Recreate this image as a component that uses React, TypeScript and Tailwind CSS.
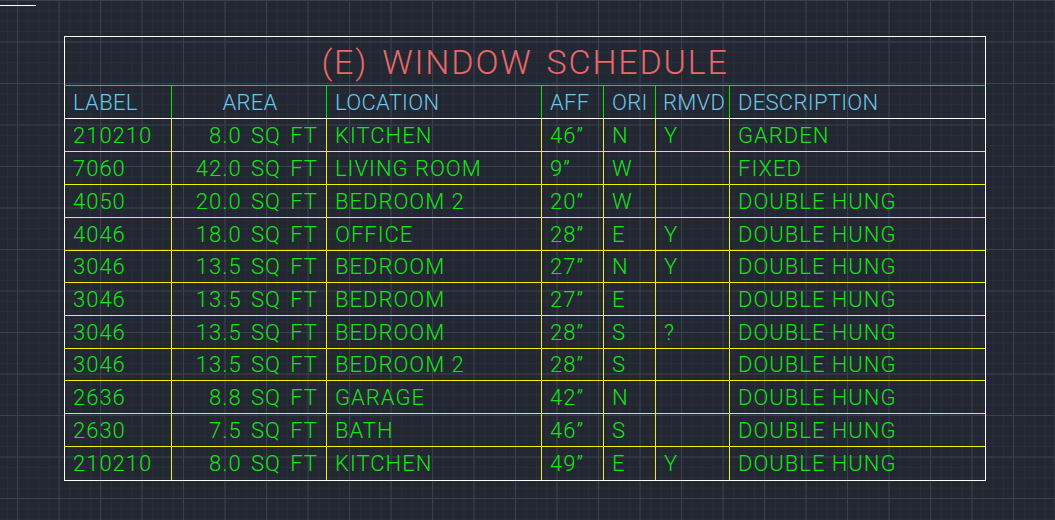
import React from 'react';

type Row = {
  label: string;
  area: string;
  location: string;
  aff: string;
  ori: string;
  rmvd: string;
  desc: string;
  h: string;
};

const rows: Row[] = [
  { label: '210210', area: '8.0 SQ FT', location: 'KITCHEN', aff: '46”', ori: 'N', rmvd: 'Y', desc: 'GARDEN', h: 'h-[33px]' },
  { label: '7060', area: '42.0 SQ FT', location: 'LIVING ROOM', aff: '9”', ori: 'W', rmvd: '', desc: 'FIXED', h: 'h-[33px]' },
  { label: '4050', area: '20.0 SQ FT', location: 'BEDROOM 2', aff: '20”', ori: 'W', rmvd: '', desc: 'DOUBLE HUNG', h: 'h-[33px]' },
  { label: '4046', area: '18.0 SQ FT', location: 'OFFICE', aff: '28”', ori: 'E', rmvd: 'Y', desc: 'DOUBLE HUNG', h: 'h-[33px]' },
  { label: '3046', area: '13.5 SQ FT', location: 'BEDROOM', aff: '27”', ori: 'N', rmvd: 'Y', desc: 'DOUBLE HUNG', h: 'h-[32px]' },
  { label: '3046', area: '13.5 SQ FT', location: 'BEDROOM', aff: '27”', ori: 'E', rmvd: '', desc: 'DOUBLE HUNG', h: 'h-[33px]' },
  { label: '3046', area: '13.5 SQ FT', location: 'BEDROOM', aff: '28”', ori: 'S', rmvd: '?', desc: 'DOUBLE HUNG', h: 'h-[33px]' },
  { label: '3046', area: '13.5 SQ FT', location: 'BEDROOM 2', aff: '28”', ori: 'S', rmvd: '', desc: 'DOUBLE HUNG', h: 'h-[32px]' },
  { label: '2636', area: '8.8 SQ FT', location: 'GARAGE', aff: '42”', ori: 'N', rmvd: '', desc: 'DOUBLE HUNG', h: 'h-[33px]' },
  { label: '2630', area: '7.5 SQ FT', location: 'BATH', aff: '46”', ori: 'S', rmvd: '', desc: 'DOUBLE HUNG', h: 'h-[33px]' },
  { label: '210210', area: '8.0 SQ FT', location: 'KITCHEN', aff: '49”', ori: 'E', rmvd: 'Y', desc: 'DOUBLE HUNG', h: 'h-[33px]' },
];

const cell = 'flex items-center pl-2 whitespace-nowrap';

export default function App() {
  return (
    <div className="relative w-[1055px] h-[520px] overflow-hidden bg-[#222731] bg-[linear-gradient(to_right,#394050_1px,transparent_1px),linear-gradient(to_bottom,#394050_1px,transparent_1px),linear-gradient(to_right,#282e39_1px,transparent_1px),linear-gradient(to_bottom,#282e39_1px,transparent_1px)] bg-[size:41.5px_41.5px,41.5px_41.5px,10.375px_10.375px,10.375px_10.375px] bg-[position:17px_0,0_0,7px_0,0_0] font-['Roboto','Liberation_Sans',sans-serif] font-light pt-[5px]">
      {/* stray line top-left */}
      <div className="h-px w-[36px] bg-white" />

      {/* Schedule table */}
      <div className="ml-[64px] mt-[30px] w-[922px] border border-white">
        {/* Title */}
        <div className="h-[49px] border-b border-[#00e600] flex items-center justify-center pt-[2px] text-[34px] tracking-[1.8px] [word-spacing:4px] text-[#e8686a]">
          (E) WINDOW SCHEDULE
        </div>

        {/* Header */}
        <div className="flex h-[33px] border-b border-white text-[22px] tracking-[0.3px] text-[#6cc6ea]">
          <div className={`${cell} w-[106px]`}>LABEL</div>
          <div className={`${cell} w-[155px] border-l border-[#00e600] justify-center pl-0 pr-[6px]`}>AREA</div>
          <div className={`${cell} w-[215px] border-l border-[#00e600]`}>LOCATION</div>
          <div className={`${cell} w-[62px] border-l border-[#00e600]`}>AFF</div>
          <div className={`${cell} w-[52px] border-l border-[#00e600]`}>ORI</div>
          <div className={`${cell} w-[74px] border-l border-[#00e600] pl-[7px]`}>RMVD</div>
          <div className={`${cell} w-[256px] border-l border-[#00e600]`}>DESCRIPTION</div>
        </div>

        {/* Data rows */}
        {rows.map((r, i) => (
          <div
            key={i}
            className={`flex ${r.h} text-[22px] tracking-[1px] text-[#14e414] ${
              i < rows.length - 1 ? 'border-b border-[#f0f000]' : ''
            }`}
          >
            <div className={`${cell} w-[106px]`}>{r.label}</div>
            <div className={`${cell} w-[155px] border-l border-[#f0f000] justify-end pl-0 pr-2 [word-spacing:3px]`}>{r.area}</div>
            <div className={`${cell} w-[215px] border-l border-[#f0f000]`}>{r.location}</div>
            <div className={`${cell} w-[62px] border-l border-[#f0f000]`}>{r.aff}</div>
            <div className={`${cell} w-[52px] border-l border-[#f0f000]`}>{r.ori}</div>
            <div className={`${cell} w-[74px] border-l border-[#f0f000]`}>{r.rmvd}</div>
            <div className={`${cell} w-[256px] border-l border-[#f0f000]`}>{r.desc}</div>
          </div>
        ))}
      </div>
    </div>
  );
}
